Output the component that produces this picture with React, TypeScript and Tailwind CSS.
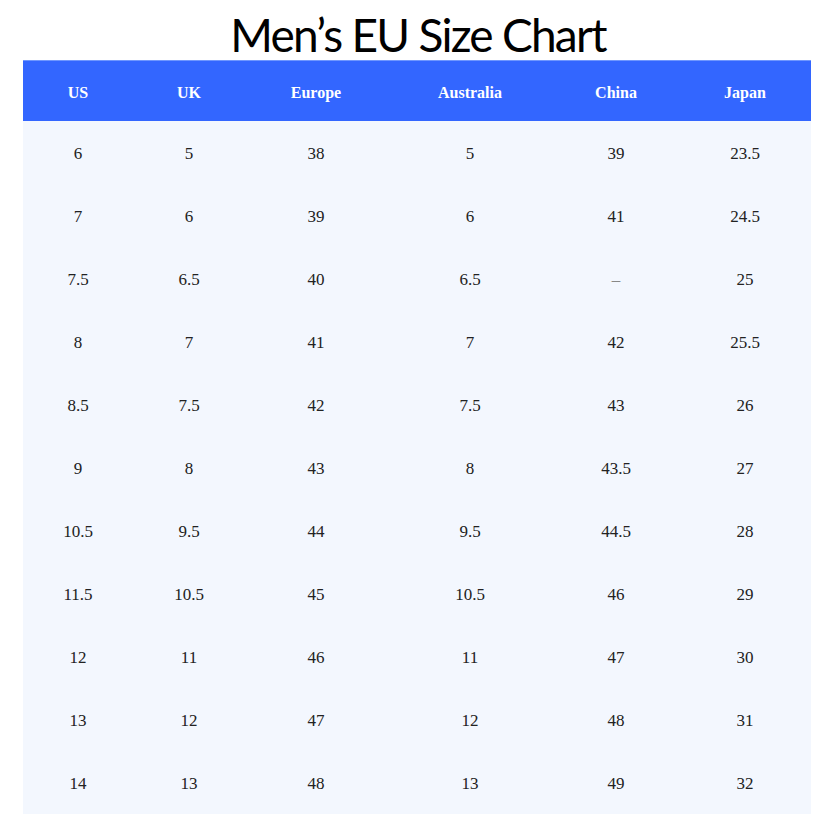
const headers = ['US', 'UK', 'Europe', 'Australia', 'China', 'Japan'];

const rows = [
  ['6', '5', '38', '5', '39', '23.5'],
  ['7', '6', '39', '6', '41', '24.5'],
  ['7.5', '6.5', '40', '6.5', '–', '25'],
  ['8', '7', '41', '7', '42', '25.5'],
  ['8.5', '7.5', '42', '7.5', '43', '26'],
  ['9', '8', '43', '8', '43.5', '27'],
  ['10.5', '9.5', '44', '9.5', '44.5', '28'],
  ['11.5', '10.5', '45', '10.5', '46', '29'],
  ['12', '11', '46', '11', '47', '30'],
  ['13', '12', '47', '12', '48', '31'],
  ['14', '13', '48', '13', '49', '32'],
];

const cols = 'grid grid-cols-[110px_112px_142px_166px_126px_132px]';

export default function App() {
  return (
    <div className="w-[833px] h-[833px] bg-white">
      <h1 className="h-[60px] pt-[9px] pl-[3px] text-center text-[46px] leading-[51px] text-black font-['Lato','Open_Sans',sans-serif] tracking-[-1.75px] whitespace-nowrap">
        Men’s EU Size Chart
      </h1>
      <div className="ml-[23px] w-[788px] font-['Liberation_Serif','Times_New_Roman',serif]">
        <div className={`${cols} h-[61px] pt-[3px] bg-[#3366ff] border-t border-[#6f97ff] items-center text-white font-bold text-[16px]`}>
          {headers.map((h) => (
            <div key={h} className="text-center">{h}</div>
          ))}
        </div>
        <div className="bg-[#f3f7fe]">
          {rows.map((r, i) => (
            <div key={i} className={`${cols} h-[63px] pt-[2px] items-center text-[17px] text-[#222]`}>
              {r.map((c, j) => (
                <div key={j} className={c === '–' ? 'text-center text-[#888]' : 'text-center'}>{c}</div>
              ))}
            </div>
          ))}
        </div>
      </div>
    </div>
  );
}
